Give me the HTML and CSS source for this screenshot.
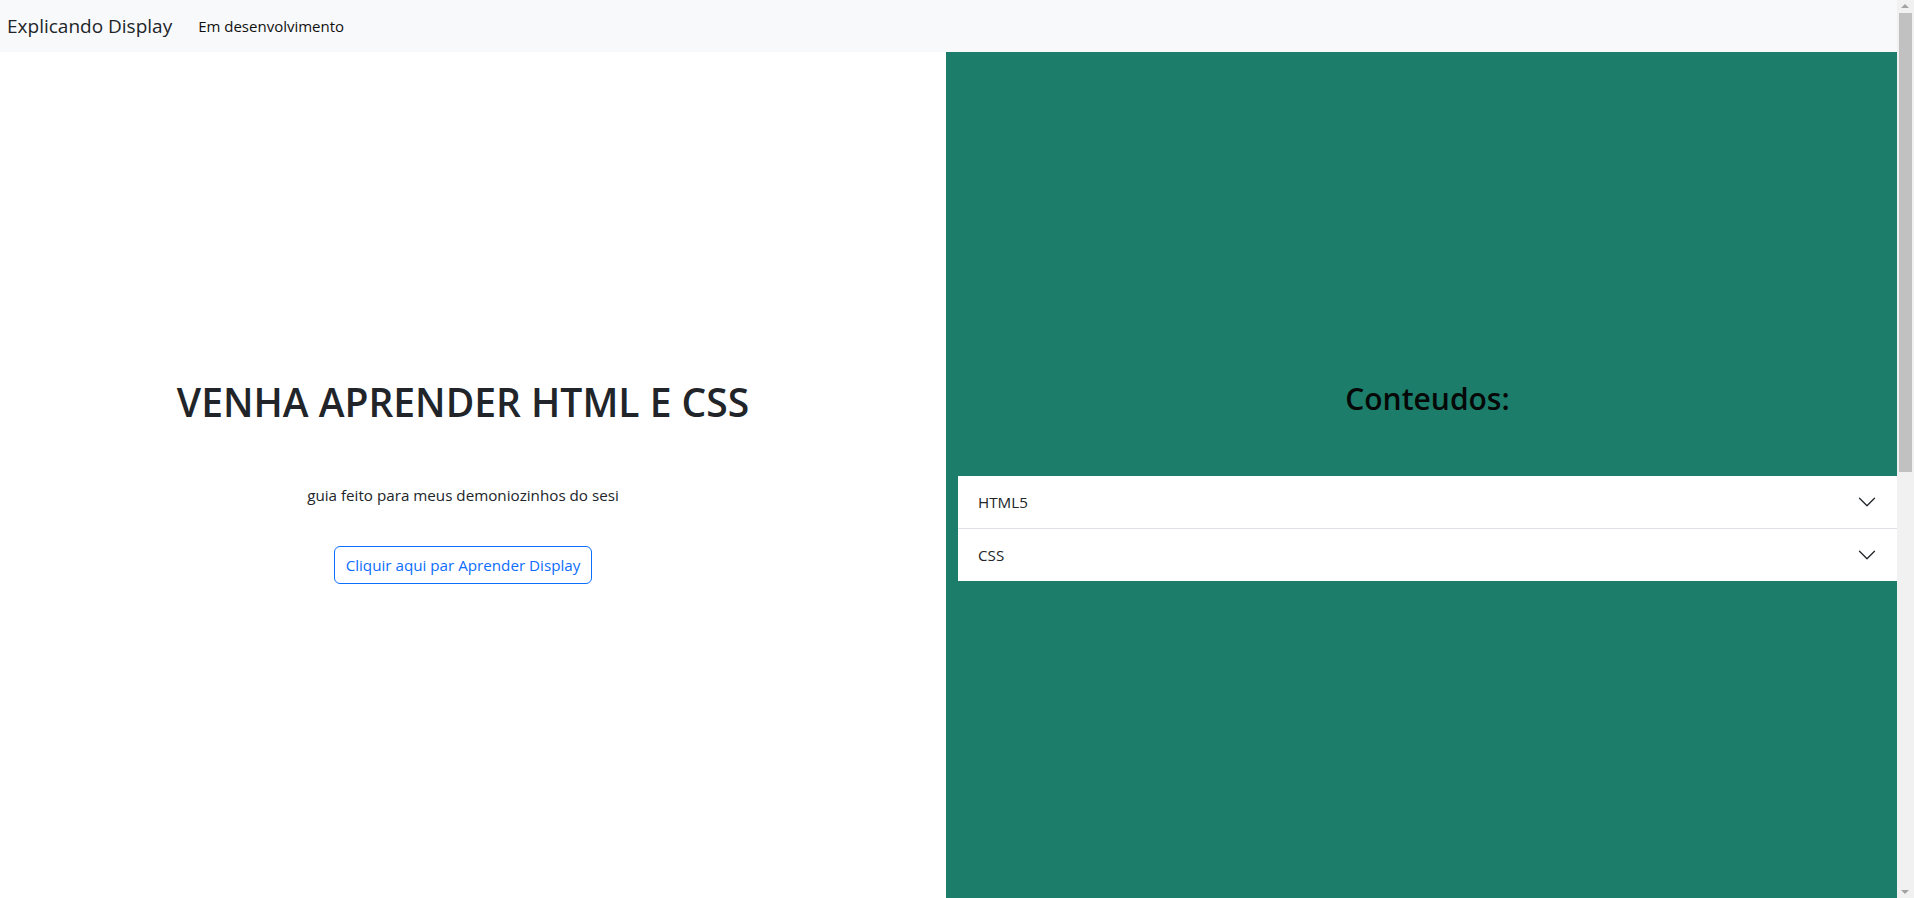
FILE: index.html
```html
<!DOCTYPE html>
<html lang="pt-BR">
<head>
<meta charset="utf-8">
<title>Explicando Display</title>
<link rel="stylesheet" href="styles.css">
</head>
<body>
<nav class="navbar">
  <a class="brand" href="#">Explicando Display</a>
  <a class="nav-link" href="#">Em desenvolvimento</a>
</nav>
<main class="hero">
  <section class="intro">
    <h1 class="intro-title">VENHA APRENDER HTML E CSS</h1>
    <p class="intro-text">guia feito para meus demoniozinhos do sesi</p>
    <a class="btn-outline" href="#">Cliquir aqui par Aprender Display</a>
  </section>
  <section class="topics">
    <h2 class="topics-title">Conteudos:</h2>
    <div class="accordion">
      <div class="accordion-item">
        <button class="accordion-button" type="button">
          <span>HTML5</span>
          <svg class="chevron" viewBox="0 0 16 16" width="20" height="20"><path fill="none" stroke="#212529" stroke-linecap="round" stroke-linejoin="round" d="M2 5L8 11L14 5"/></svg>
        </button>
      </div>
      <div class="accordion-item">
        <button class="accordion-button" type="button">
          <span>CSS</span>
          <svg class="chevron" viewBox="0 0 16 16" width="20" height="20"><path fill="none" stroke="#212529" stroke-linecap="round" stroke-linejoin="round" d="M2 5L8 11L14 5"/></svg>
        </button>
      </div>
    </div>
  </section>
</main>
<div class="scrollbar" aria-hidden="true">
  <span class="scroll-arrow scroll-up"></span>
  <span class="scroll-thumb"></span>
  <span class="scroll-arrow scroll-down"></span>
</div>
</body>
</html>
```

FILE: styles.css
```css
body {
  margin: 0;
  padding-right: 17px;
  font-family: "Segoe UI", "Open Sans", "Liberation Sans", sans-serif;
  font-size: 16px;
  color: #212529;
  background: #fff;
}
a {
  text-decoration: none;
}
.navbar {
  height: 52px;
  background: #f8f9fa;
  display: flex;
  align-items: center;
  padding: 0 7px;
  box-sizing: border-box;
}
.brand {
  font-size: 19px;
  color: #212529;
  margin-right: 26px;
  line-height: 30px;
  padding-bottom: 1px;
}
.nav-link {
  font-size: 15px;
  color: #111;
  line-height: 24px;
}
.hero {
  display: flex;
  min-height: 1650px;
}
.intro {
  width: 946px;
  flex: none;
  box-sizing: border-box;
  padding: 327px 20px 0 0;
  display: flex;
  flex-direction: column;
  align-items: center;
  text-align: center;
}
.intro-title {
  margin: 0;
  font-size: 39px;
  font-weight: 600;
  line-height: 1.2;
  color: #212529;
}
.intro-text {
  margin: 57px 0 0;
  font-size: 15.2px;
  line-height: 24px;
}
.btn-outline {
  margin-top: 39px;
  height: 38px;
  box-sizing: border-box;
  padding: 0 11px;
  display: inline-flex;
  align-items: center;
  border: 1px solid #0d6efd;
  border-radius: 6px;
  color: #0d6efd;
  font-size: 15.2px;
}
.topics {
  flex: 1;
  background: #1c7d6a;
  padding: 329px 0 0 12px;
  box-sizing: border-box;
}
.topics-title {
  margin: 0;
  text-align: center;
  font-size: 30px;
  font-weight: 600;
  line-height: 1.2;
  color: #050807;
}
.accordion {
  margin-top: 59px;
  background: #fff;
}
.accordion-item + .accordion-item {
  border-top: 1px solid #dee2e6;
}
.accordion-button {
  width: 100%;
  display: flex;
  align-items: center;
  justify-content: space-between;
  padding: 16px 20px;
  border: 0;
  background: #fff;
  font: inherit;
  font-size: 15.2px;
  line-height: 20px;
  color: #212529;
  text-align: left;
  cursor: pointer;
}
.chevron {
  flex: none;
  display: block;
}
.scrollbar {
  position: fixed;
  top: 0;
  right: 0;
  width: 17px;
  height: 100vh;
  background: #f1f1f1;
}
.scroll-thumb {
  position: absolute;
  top: 13px;
  left: 2px;
  width: 13px;
  height: 459px;
  background: #c1c1c1;
}
.scroll-arrow {
  position: absolute;
  left: 4px;
  width: 0;
  height: 0;
  border-left: 4.5px solid transparent;
  border-right: 4.5px solid transparent;
}
.scroll-up {
  top: 4px;
  border-bottom: 4px solid #a3a3a3;
}
.scroll-down {
  bottom: 4px;
  border-top: 4px solid #a3a3a3;
}
```
